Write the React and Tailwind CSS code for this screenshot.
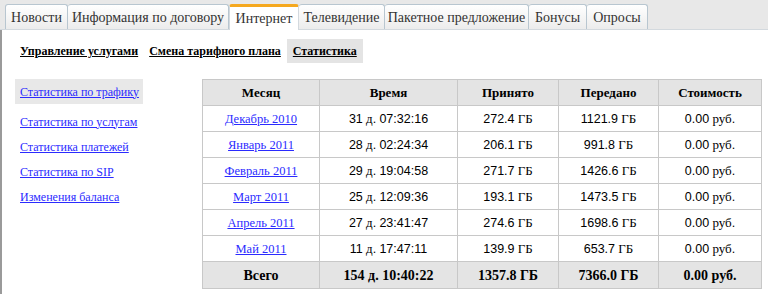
import React from "react";

const tabs = [
  { label: "Новости", w: "w-[63px]" },
  { label: "Информация по договору", w: "w-[161px]" },
  { label: "Интернет", w: "w-[70px]", active: true },
  { label: "Телевидение", w: "w-[86px]" },
  { label: "Пакетное предложение", w: "w-[144px]" },
  { label: "Бонусы", w: "w-[58px]" },
  { label: "Опросы", w: "w-[61px]" },
];

const rows = [
  ["Декабрь 2010", "31 д. 07:32:16", "272.4 ГБ", "1121.9 ГБ", "0.00 руб."],
  ["Январь 2011", "28 д. 02:24:34", "206.1 ГБ", "991.8 ГБ", "0.00 руб."],
  ["Февраль 2011", "29 д. 19:04:58", "271.7 ГБ", "1426.6 ГБ", "0.00 руб."],
  ["Март 2011", "25 д. 12:09:36", "193.1 ГБ", "1473.5 ГБ", "0.00 руб."],
  ["Апрель 2011", "27 д. 23:41:47", "274.6 ГБ", "1698.6 ГБ", "0.00 руб."],
  ["Май 2011", "11 д. 17:47:11", "139.9 ГБ", "653.7 ГБ", "0.00 руб."],
];

function Mixed({ text }) {
  const parts = text.split(/([0-9.:]+)/).filter((p) => p !== "");
  return (
    <>
      {parts.map((p, i) =>
        /^[0-9.:]+$/.test(p) ? (
          <span key={i} className="font-['Liberation_Sans',sans-serif] text-[12.5px]">
            {p}
          </span>
        ) : (
          <span key={i}>{p}</span>
        )
      )}
    </>
  );
}

const sideLinks = [
  "Статистика по услугам",
  "Статистика платежей",
  "Статистика по SIP",
  "Изменения баланса",
];

const cell = "border border-[#c8c8c8] text-center align-middle p-0";

export default function App() {
  return (
    <div className="w-[768px] h-[294px] overflow-hidden bg-white flex flex-col font-['Liberation_Serif',serif] text-black">
      <div className="h-[30px] shrink-0 bg-[#e8e8e8] border-b border-[#d3d9de] flex items-end pl-[5px]">
        {tabs.map((t, i) =>
          t.active ? (
            <div
              key={i}
              className={`${t.w} h-[26px] -mb-px bg-white border-t-[3px] border-t-[#f5a81f] border-x border-x-[#d3d9de] rounded-t-[3px] flex items-center justify-center text-[14px] text-[#333]`}
            >
              {t.label}
            </div>
          ) : (
            <div
              key={i}
              className={`${t.w} h-[25px] bg-gradient-to-b from-white to-[#ececec] border-t border-r border-[#b8c6d0] ${i === 0 ? "border-l" : ""} rounded-t-[3px] flex items-center justify-center text-[14px] text-[#333]`}
            >
              {t.label}
            </div>
          )
        )}
      </div>
      <div className="flex-1 border-l-2 border-[#9a9a9a] pl-[13px]">
        <div className="flex mt-[9px] h-[24px] text-[12px] font-bold">
          <a className="px-[5px] flex items-center underline">Управление услугами</a>
          <a className="px-[6px] flex items-center underline">Смена тарифного плана</a>
          <a className="px-[6px] flex items-center underline bg-[#e4e4e4]">Статистика</a>
        </div>
        <div className="flex mt-[16px]">
          <div className="w-[128px] shrink-0 text-[12px] text-[#2b2bff]">
            <div className="h-[25px] bg-[#e8e8e8] flex items-center px-[5px]">
              <a className="underline whitespace-nowrap">Статистика по трафику</a>
            </div>
            <div className="flex flex-col mt-[5px]">
              {sideLinks.map((l) => (
                <div key={l} className="h-[25px] flex items-center px-[5px]">
                  <a className="underline whitespace-nowrap">{l}</a>
                </div>
              ))}
            </div>
          </div>
          <table className="ml-[59px] border-collapse w-[559px] table-fixed text-[13px]">
            <colgroup>
              <col className="w-[117px]" />
              <col className="w-[138px]" />
              <col className="w-[101px]" />
              <col className="w-[100px]" />
              <col className="w-[103px]" />
            </colgroup>
            <thead>
              <tr className="h-[26px] bg-[#e4e4e4] font-bold">
                {["Месяц", "Время", "Принято", "Передано", "Стоимость"].map((h) => (
                  <th key={h} className={cell}>
                    {h}
                  </th>
                ))}
              </tr>
            </thead>
            <tbody>
              {rows.map((r) => (
                <tr key={r[0]} className="h-[26px]">
                  <td className={cell}>
                    <a className="underline text-[#2b2bff] text-[12.5px]">{r[0]}</a>
                  </td>
                  {r.slice(1).map((c, j) => (
                    <td key={j} className={cell}>
                      <Mixed text={c} />
                    </td>
                  ))}
                </tr>
              ))}
              <tr className="h-[27px] bg-[#e4e4e4] font-bold text-[14px]">
                {["Всего", "154 д. 10:40:22", "1357.8 ГБ", "7366.0 ГБ", "0.00 руб."].map((c) => (
                  <td key={c} className={cell}>
                    {c}
                  </td>
                ))}
              </tr>
            </tbody>
          </table>
        </div>
      </div>
    </div>
  );
}
